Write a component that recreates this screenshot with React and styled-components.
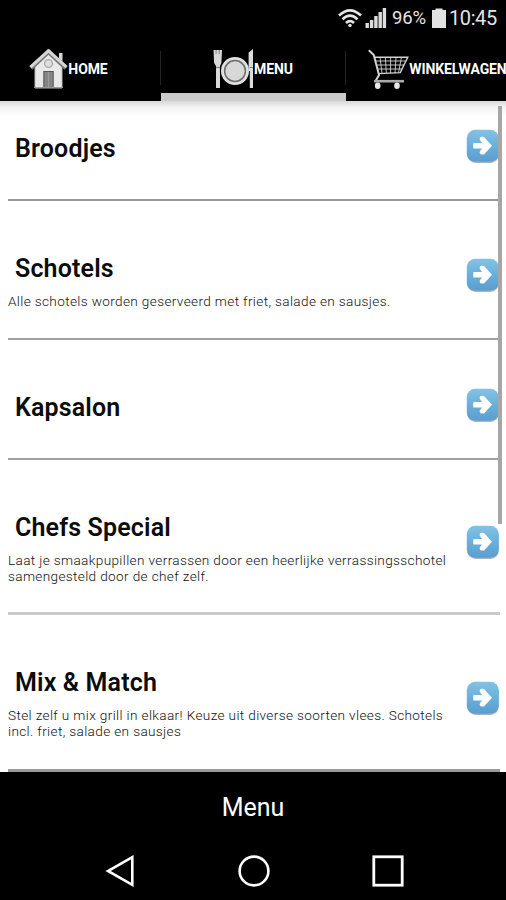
import React, {useState} from 'react';
import styled, {createGlobalStyle} from 'styled-components';

const GlobalStyle = createGlobalStyle`
    * {
        box-sizing: border-box;
    }

    body {
        margin: 0;
        background-color: black;
        font-family: Roboto, 'Liberation Sans', sans-serif;
    }
`

const Phone_div = styled.div`
    width: 506px;
    height: 900px;
    display: flex;
    flex-direction: column;
    overflow: hidden;
    background-color: black;
`

// status bar
const Status_div = styled.div`
    height: 38px;
    padding: 0 9px 2px 0;
    display: flex;
    justify-content: flex-end;
    align-items: center;
    flex-shrink: 0;
    color: #e4e4e4;

    svg {
        display: block;
    }
`

const Percent_span = styled.span`
    width: 35px;
    margin: 0 5px 0 5px;
    font-size: 18.5px;
    letter-spacing: -0.2px;
    white-space: nowrap;
`

const Clock_span = styled.span`
    width: 48px;
    margin-left: 3px;
    font-size: 20px;
    letter-spacing: -0.4px;
    white-space: nowrap;
`

// tabs, the strip is scrolled a little to the left
const Tabs_nav = styled.nav`
    height: 63px;
    margin-left: -23px;
    display: flex;
    flex-shrink: 0;
`

const Tab_button = styled.button`
    width: ${props => props.$width}px;
    height: 63px;
    padding: 0 0 1px;
    flex-shrink: 0;

    display: flex;
    justify-content: center;
    align-items: center;
    border: none;
    background-color: transparent;
    box-shadow: ${props => props.$active ? "inset 0 -8px 0 #cbcbcb" : "none"};

    color: white;
    font-family: inherit;
    font-size: 14px;
    font-weight: bold;
    letter-spacing: -0.1px;
    white-space: nowrap;
    cursor: pointer;

    svg {
        display: block;
        flex-shrink: 0;
        margin-left: -1px;
    }
`

const Divider_div = styled.div`
    width: 1px;
    height: 34px;
    margin: 13px 0 0 -1px;
    flex-shrink: 0;
    background-color: #242424;
`

// list
const List_main = styled.main`
    position: relative;
    height: 671px;
    padding: 0 6px 0 8px;
    flex-shrink: 0;
    overflow: hidden;
    background-color: white;
`

const Shadow_div = styled.div`
    position: absolute;
    top: 0;
    left: 0;
    right: 0;
    height: 16px;
    background: linear-gradient(#d8d8d8, #f3f3f3 40%, white);
`

const Scrollbar_div = styled.div`
    position: absolute;
    top: 5px;
    right: 4px;
    width: 4px;
    height: 418px;
    background-color: #a6a6a6;
`

const Rows_div = styled.div`
    position: relative;
    margin-top: -20px;
`

const Row_div = styled.div`
    height: ${props => props.$height}px;
    padding-top: 12px;
    display: flex;
    align-items: center;
    justify-content: space-between;
    border-bottom: ${props => props.$line};
    cursor: pointer;
`

const Text_div = styled.div`
    align-self: flex-start;
    padding-top: 41px;
`

const Title_h2 = styled.h2`
    margin: 0 0 0 7px;
    color: #0c0c0c;
    font-size: 25px;
    font-weight: 600;
    line-height: 30px;
    letter-spacing: 0.15px;
    white-space: nowrap;
`

const Description_p = styled.p`
    margin: 9px 0 0;
    color: #111;
    font-size: 13.6px;
    font-weight: 300;
    line-height: 16px;
    letter-spacing: 0.36px;
    white-space: pre;
`

const Arrow_svg = styled.svg`
    width: 34px;
    height: 35px;
    flex-shrink: 0;
`

// footer
const Footer_div = styled.footer`
    height: 70px;
    display: flex;
    justify-content: center;
    align-items: center;
    flex-shrink: 0;
    color: white;
    font-size: 25px;
`

const Android_div = styled.div`
    height: 58px;
    padding: 0 102px 0 105px;
    display: flex;
    justify-content: space-between;
    align-items: center;
    flex-shrink: 0;

    svg {
        display: block;
    }
`

const Wifi = () => (
    <svg width="24" height="20" viewBox="0 0 24 20" fill="none" stroke="#e6e6e6" strokeWidth="2.6">
        <path d="M1 7.5Q12 -2.8 23 7.5"/>
        <path d="M4.5 11.4Q12 4 19.5 11.4"/>
        <path d="M8 15Q12 11.2 16 15"/>
        <circle cx="12" cy="17.4" r="1.7" fill="#e6e6e6" stroke="none"/>
    </svg>
)

const Signal_svg = styled.svg`
    margin-left: 3px;
`

const Signal = () => (
    <Signal_svg width="22" height="21" viewBox="0 0 22 21" fill="#dcdcdc">
        <rect x="0.5" y="15" width="3.4" height="5"/>
        <rect x="4.9" y="12" width="3.4" height="8"/>
        <rect x="9.2" y="8" width="3.4" height="12"/>
        <rect x="13.5" y="4" width="3.4" height="16"/>
        <rect x="17.7" y="0" width="3.4" height="20"/>
    </Signal_svg>
)

const Battery = () => (
    <svg width="14" height="20" viewBox="0 0 14 20" fill="#e2e2e2">
        <path d="M3.5 0.5h7v1.5H14v18H0V2h3.5z"/>
    </svg>
)

const HomeIcon = () => (
    <svg width="39" height="40" viewBox="0 0 39 40">
        <path d="M30 4h3.5v12L30 12z" fill="#d6d6d6"/>
        <path d="M6 18L19.5 5L33 18V39H6z" fill="#e9e9e9" stroke="#b8b8b8" strokeWidth="1"/>
        <path d="M1.8 19L19.5 2.5L37 19" fill="none" stroke="#777" strokeWidth="4.6"/>
        <path d="M1.5 18.2L19.5 1.8L37.5 18.2" fill="none" stroke="#d6d6d6" strokeWidth="3"/>
        <circle cx="19.5" cy="14.5" r="3.9" fill="#dedede" stroke="#aaa" strokeWidth="1.4"/>
        <rect x="14.8" y="22.5" width="9.4" height="16.5" fill="#858585" stroke="#555"/>
        <path d="M19.5 23v16" stroke="#9c9c9c"/>
        <path d="M5 38.5h29" stroke="#999"/>
    </svg>
)

const PlateIcon = () => (
    <svg width="41" height="40" viewBox="0 0 41 40">
        <path d="M0.5 1h8.5l-.6 13-1.4 3V39H3V17L1.1 14z" fill="#d9d9d9"/>
        <path d="M3.1 1v4M6.3 1v4" stroke="#777" strokeWidth="0.9"/>
        <path d="M3 18.5h4" stroke="#777"/>
        <circle cx="22" cy="22" r="14" fill="#e0e0e0"/>
        <circle cx="22" cy="22" r="10.4" fill="#d8d8d8" stroke="#6e6e6e" strokeWidth="1.5"/>
        <path d="M35.6 3.5L40 0V39H36.8V22H35.6z" fill="#dcdcdc"/>
        <path d="M36.7 18.5h3.3" stroke="#777"/>
    </svg>
)

const CartIcon = () => (
    <svg width="41" height="41" viewBox="0 0 41 41" fill="none" stroke="#d4d4d4">
        <path d="M0.8 1.3L5.8 6L11 26L7.5 32" strokeWidth="2"/>
        <path d="M7 8.2H39.8L32.3 23.6L10.5 24.6" strokeWidth="1.4"/>
        <path d="M8 12H38M9 16H36M10 20H34M12 8.2L14 24M17.3 8.2L18.3 24M22.6 8.2V24M28 8.2L27 24M33.5 8.2L30.5 23.6" strokeWidth="0.9"/>
        <path d="M6 32.2H36" strokeWidth="2.6" stroke="#aaa"/>
        <ellipse cx="9.7" cy="36.7" rx="2.8" ry="3.2" fill="#e8e8e8" stroke="none"/>
        <ellipse cx="29" cy="36.7" rx="2.8" ry="3.2" fill="#e8e8e8" stroke="none"/>
    </svg>
)

const Arrow = () => (
    <Arrow_svg viewBox="0 0 34 35">
        <defs>
            <linearGradient id="arrowBlue" x1="0" y1="0" x2="0" y2="1">
                <stop offset="0" stopColor="#84c2e4"/>
                <stop offset="0.5" stopColor="#68b0dc"/>
                <stop offset="1" stopColor="#5b9dcf"/>
            </linearGradient>
        </defs>
        <rect x="1.2" y="2.2" width="31.6" height="31.8" rx="8.5" fill="#a9b4bb"/>
        <rect x="0.8" y="0.8" width="32" height="32" rx="8.5" fill="url(#arrowBlue)"/>
        <path d="M7.5 14H16L13.8 10.8Q13 8 16.2 7.8L18 8L26 16.7L18 25.4L16 25.6Q13 25.2 13.8 22.6L16 19.6H7.5Q6.8 16.8 7.5 14z" fill="white"/>
    </Arrow_svg>
)

const tabs = [
    {name: "HOME", width: 184, Icon: HomeIcon},
    {name: "MENU", width: 185, Icon: PlateIcon},
    {name: "WINKELWAGEN", width: 184, Icon: CartIcon}
];

const dishes = [
    {title: "Broodjes", height: 120, line: "2px solid #989898"},
    {title: "Schotels", text: "Alle schotels worden geserveerd met friet, salade en sausjes.", height: 139, line: "2px solid #a0a0a0"},
    {title: "Kapsalon", height: 120, line: "2px solid #a0a0a0"},
    {title: "Chefs Special", text: "Laat je smaakpupillen verrassen door een heerlijke verrassingsschotel\nsamengesteld door de chef zelf.", height: 155, line: "3px solid #cacaca"},
    {title: "Mix & Match", text: "Stel zelf u mix grill in elkaar! Keuze uit diverse soorten vlees. Schotels\nincl. friet, salade en sausjes", height: 157, line: "3px solid #999"}
];

const App = () => {
    const [active, setActive] = useState("MENU");

    return (
        <>
            <GlobalStyle/>
            <Phone_div>
                <Status_div>
                    <Wifi/>
                    <Signal/>
                    <Percent_span>96%</Percent_span>
                    <Battery/>
                    <Clock_span>10:45</Clock_span>
                </Status_div>
                <Tabs_nav>
                    {tabs.map(({name, width, Icon}, index) => (
                        <React.Fragment key={name}>
                            {index > 0 && <Divider_div/>}
                            <Tab_button $width={width} $active={active === name} onClick={() => setActive(name)}>
                                <Icon/>
                                {name}
                            </Tab_button>
                        </React.Fragment>
                    ))}
                </Tabs_nav>
                <List_main>
                    <Shadow_div/>
                    <Rows_div>
                        {dishes.map(dish => (
                            <Row_div key={dish.title} $height={dish.height} $line={dish.line}>
                                <Text_div>
                                    <Title_h2>{dish.title}</Title_h2>
                                    {dish.text && <Description_p>{dish.text}</Description_p>}
                                </Text_div>
                                <Arrow/>
                            </Row_div>
                        ))}
                    </Rows_div>
                    <Scrollbar_div/>
                </List_main>
                <Footer_div>Menu</Footer_div>
                <Android_div>
                    <svg width="30" height="32" viewBox="0 0 30 32" fill="none" stroke="white" strokeWidth="2.6">
                        <path d="M27.3 2.2V29.8L3 16z"/>
                    </svg>
                    <svg width="32" height="32" viewBox="0 0 32 32" fill="none" stroke="white" strokeWidth="2.6">
                        <circle cx="16" cy="16" r="14.4"/>
                    </svg>
                    <svg width="32" height="32" viewBox="0 0 32 32" fill="none" stroke="white" strokeWidth="2.8">
                        <rect x="1.8" y="1.8" width="28.4" height="28.4"/>
                    </svg>
                </Android_div>
            </Phone_div>
        </>
    );
}

export default App;
